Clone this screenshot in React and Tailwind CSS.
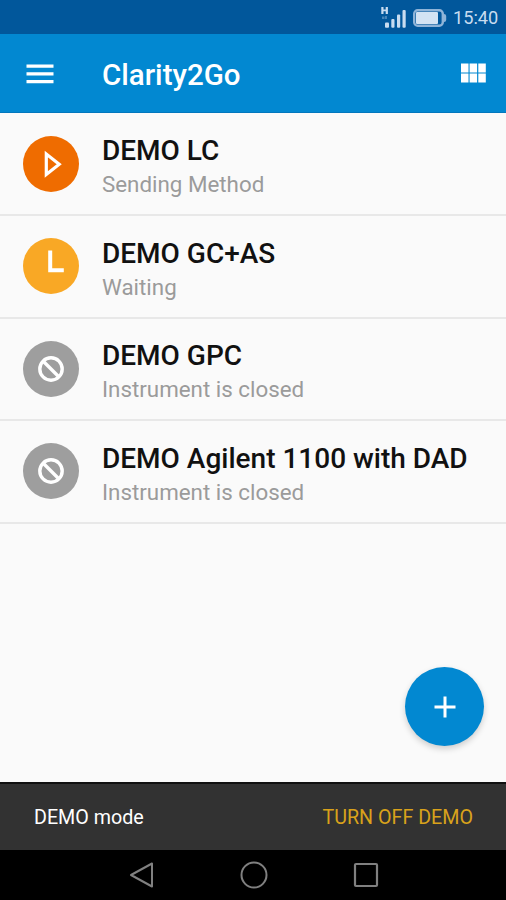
import React from 'react';

const INSTRUMENTS = [
    { id: 'lc', name: 'DEMO LC', status: 'Sending Method', icon: 'play', color: 'bg-[#ef6c00]', row: 'h-[103px] pt-[22.5px]', text: '-mt-[2.5px]' },
    { id: 'gc', name: 'DEMO GC+AS', status: 'Waiting', icon: 'clock', color: 'bg-[#f9a825]', row: 'h-[103px] pt-[22px]', text: '-mt-[2.5px]' },
    { id: 'gpc', name: 'DEMO GPC', status: 'Instrument is closed', icon: 'blocked', color: 'bg-[#9e9e9e]', row: 'h-[102px] pt-[22px]', text: '-mt-[3.5px]' },
    { id: 'dad', name: 'DEMO Agilent 1100 with DAD', status: 'Instrument is closed', icon: 'blocked', color: 'bg-[#9e9e9e]', row: 'h-[103px] pt-[22px]', text: '-mt-[2px]' }
];

const StatusIcon = ({ icon }) => (
    <svg viewBox="0 0 56 56" width="56" height="56" fill="none" stroke="#fff" strokeWidth="3.4">
        {icon === 'play' && <path d="M23.3 18v20.4L36.2 28.2z" strokeWidth="3.2" />}
        {icon === 'clock' && <path d="M27.2 12.5v19.8h13.6" strokeWidth="4" />}
        {icon === 'blocked' && (
            <>
                <circle cx="28" cy="28" r="11.2" />
                <path d="M20 20l16 16" />
            </>
        )}
    </svg>
);

const StatusBar = () => (
    <div className="h-[34px] bg-[#01579b] flex items-center justify-end pr-2 text-[#c8dcf0]">
        <svg viewBox="0 0 28 24" width="28" height="24" fill="currentColor" className="mt-px mr-[5px]">
            <path d="M1.3 1h2.2v2.4h2.2V1h2.2v7H5.7V5.3H3.5V8H1.3z" />
            <path d="M2 10.5h2.5V13H2zM5 10h2v3H5z" opacity=".35" />
            <rect x="5" y="16.5" width="4" height="5.2" rx="1" />
            <rect x="11.3" y="13" width="3.2" height="8.7" rx="1" />
            <rect x="17" y="8.5" width="3.2" height="13.2" rx="1" />
            <rect x="22.5" y="4" width="3.2" height="17.7" rx="1" />
        </svg>
        <svg viewBox="0 0 34 18" width="34" height="18" fill="none" className="mt-[2px] mr-[6px]">
            <rect x="1.2" y="1.2" width="28.6" height="15.6" rx="3.5" stroke="#8fb4d8" strokeWidth="2.4" />
            <rect x="3" y="3" width="22" height="12" rx="1" fill="#d3e3f3" />
            <path d="M31 5q2.2 0 2.2 2v4q0 2-2.2 2z" fill="#8fb4d8" />
        </svg>
        <span className="w-[45px] mt-[3px] text-[18.2px] leading-none whitespace-nowrap">15:40</span>
    </div>
);

const AppBar = () => (
    <div className="h-[79px] bg-[#0288d1] border-b border-[#0277bd] flex items-center pl-[26px] pr-5">
        <svg viewBox="0 0 28 20" width="28" height="20" fill="#fff" className="mt-px">
            <path d="M.5 .5h27v3.300H.5zM.5 8.2h27v3.300H.5zM.5 15.9h27v3.300H.5z" />
        </svg>
        <h1 className="ml-12 mt-[5px] text-[29.5px] leading-none font-medium text-white">Clarity2Go</h1>
        <svg viewBox="0 0 25 20" width="25" height="20" fill="#fff" className="ml-auto">
            <path d="M0 .5h7.5v8.9H0zM8.6 .5h7.5v8.9H8.6zM17.3 .5h7.5v8.9h-7.5zM0 10.5h7.5v8.9H0zM8.6 10.5h7.5v8.9H8.6zM17.3 10.5h7.5v8.9h-7.5z" />
        </svg>
    </div>
);

const InstrumentRow = ({ item }) => (
    <li className={`flex pl-[23px] border-b-2 border-[#e8e8e8] ${item.row}`}>
        <div className={`w-14 h-14 rounded-full shrink-0 ${item.color}`}>
            <StatusIcon icon={item.icon} />
        </div>
        <div className={`ml-[23px] whitespace-nowrap ${item.text}`}>
            <div className="text-[28px] leading-[36px] text-[#111] font-medium">{item.name}</div>
            <div className="-mt-px text-[22.35px] leading-[32px] text-[#9b9b9b]">{item.status}</div>
        </div>
    </li>
);

const NavBar = () => (
    <div className="h-[50px] bg-black flex items-center justify-between pl-[128px] pr-[127px]">
        <svg viewBox="0 0 26 28" width="26" height="28" fill="none" stroke="#808080" strokeWidth="2" strokeLinejoin="round">
            <path d="M24 2.5v23L3 14z" />
        </svg>
        <svg viewBox="0 0 28 28" width="28" height="28" fill="none" stroke="#808080" strokeWidth="2">
            <circle cx="14" cy="14" r="12.5" />
        </svg>
        <svg viewBox="0 0 26 26" width="26" height="26" fill="none" stroke="#808080" strokeWidth="2.2">
            <rect x="2" y="2" width="22" height="22" rx="1" />
        </svg>
    </div>
);

const App = () => {
    return (
        <div className="relative w-[506px] h-[900px] overflow-hidden flex flex-col bg-[#fafafa] font-[Roboto,sans-serif]">
            <StatusBar />
            <AppBar />
            <ul className="flex-1">
                {INSTRUMENTS.map(item => (
                    <InstrumentRow key={item.id} item={item} />
                ))}
            </ul>

            {/* Snackbar */}
            <div className="h-[68px] bg-[#323232] border-t-2 border-[#111] flex items-center justify-between pt-[2px] pl-[34px] pr-[33px] text-[19.7px] leading-none whitespace-nowrap">
                <span className="text-white">DEMO mode</span>
                <button className="text-[#d9a21b]">TURN OFF DEMO</button>
            </div>
            <NavBar />

            <button className="absolute left-[405px] top-[667px] w-[79px] h-[79px] rounded-full bg-[#0288d1] flex items-center justify-center shadow-[0_3px_6px_rgba(0,0,0,0.18)]">
                <svg viewBox="0 0 22 22" width="22" height="22" fill="none" stroke="#fff" strokeWidth="3">
                    <path d="M11 .5v21M.5 11h21" />
                </svg>
            </button>
        </div>
    );
};

export default App;
